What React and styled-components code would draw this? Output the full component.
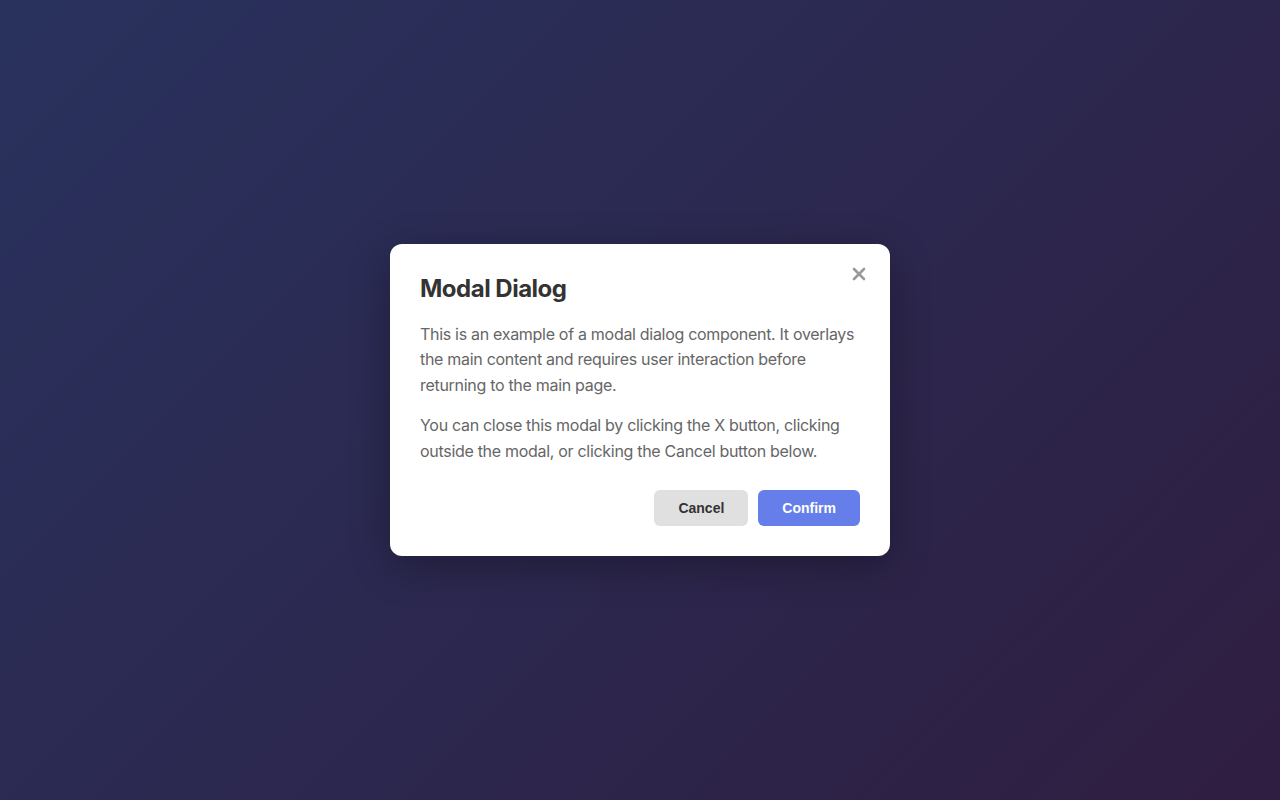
import React from 'react';
import styled, {createGlobalStyle} from 'styled-components';

const GlobalStyle = createGlobalStyle`
    html, body {
        margin: 0;
        padding: 0;
        height: 100%;
    }
    body {
        font-family: Inter, "Noto Sans", sans-serif;
    }
    #root {
        height: 100%;
    }
`;

const Page = styled.div`
    position: relative;
    height: 100vh;
    background: linear-gradient(135deg, #667eea 0%, #764ba2 100%);
`;

const Overlay = styled.div`
    position: absolute;
    inset: 0;
    background: rgba(0, 0, 0, 0.6);
    display: flex;
    align-items: center;
    justify-content: center;
`;

const Modal = styled.div`
    position: relative;
    box-sizing: border-box;
    width: 500px;
    padding: 30px;
    background: #fff;
    border-radius: 12px;
    box-shadow: 0 10px 40px rgba(0, 0, 0, 0.3);
`;

const CloseButton = styled.button`
    position: absolute;
    top: 18px;
    right: 19px;
    width: 24px;
    height: 24px;
    padding: 0;
    border: none;
    background: none;
    color: #999;
    cursor: pointer;
    display: flex;
    align-items: center;
    justify-content: center;
`;

const Title = styled.h2`
    margin: 0 0 18px;
    font-size: 24px;
    line-height: 30px;
    font-weight: 700;
    letter-spacing: -0.5px;
    color: #333;
`;

const Text = styled.p`
    margin: 0 0 ${p => (p.$last ? '0' : '15px')};
    font-size: 16px;
    line-height: 1.6;
    letter-spacing: -0.3px;
    color: #666;
`;

const Footer = styled.div`
    display: flex;
    justify-content: flex-end;
    gap: 10px;
    margin-top: 26px;
`;

const Button = styled.button`
    padding: 10px 24px;
    border: none;
    border-radius: 6px;
    font-family: "Liberation Sans", Arial, sans-serif;
    font-size: 14px;
    line-height: 16px;
    font-weight: 700;
    cursor: pointer;
    background: ${p => (p.$primary ? '#667eea' : '#e0e0e0')};
    color: ${p => (p.$primary ? '#fff' : '#333')};
`;

const App = () => {
    return (
        <Page>
            <GlobalStyle/>
            <Overlay>
                <Modal>
                    <CloseButton aria-label="Close">
                        <svg width="14" height="14" viewBox="0 0 14 14">
                            <path d="M2 2 L12 12 M12 2 L2 12" stroke="currentColor" strokeWidth="2.6" strokeLinecap="round"/>
                        </svg>
                    </CloseButton>
                    <Title>Modal Dialog</Title>
                    <Text>
                        This is an example of a modal dialog component. It overlays the main content and requires
                        user interaction before returning to the main page.
                    </Text>
                    <Text $last>
                        You can close this modal by clicking the X button, clicking outside the modal, or clicking
                        the Cancel button below.
                    </Text>
                    <Footer>
                        <Button>Cancel</Button>
                        <Button $primary>Confirm</Button>
                    </Footer>
                </Modal>
            </Overlay>
        </Page>
    );
};

export default App;
